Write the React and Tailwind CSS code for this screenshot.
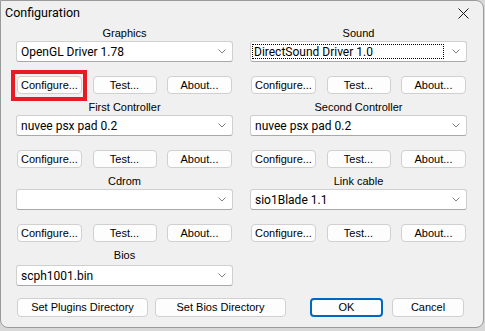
import React from 'react';

const Chevron = () => (
  <svg width="8" height="5" viewBox="0 0 8 5" className="shrink-0">
    <path d="M0.5 0.5 L4 4 L7.5 0.5" fill="none" stroke="#808080" strokeWidth="1" />
  </svg>
);

const Combo = ({ value, focused, className = '' }) => (
  <div className={'mt-[1px] h-[21px] w-full bg-white border border-[#cfcfcf] border-b-[#a8a8a8] rounded-[3px] flex items-center pr-[6px] ' + className}>
    {focused ? (
      <div className="ml-[1px] mr-[8px] flex-1 h-[15px] border border-dotted border-black flex items-center pl-[1px] text-[12px] leading-none">
        {value}
      </div>
    ) : (
      <div className="flex-1 pl-[4px] text-[12px] leading-none">{value}</div>
    )}
    <Chevron />
  </div>
);

const Button = ({ children, className = '', primary }) => (
  <div
    className={
      'h-[18px] flex items-center justify-center bg-[#fdfdfd] rounded-[4px] text-[11px] leading-none font-["Liberation_Sans",sans-serif] ' +
      (primary ? 'border-2 border-[#0067c0] ' : 'border border-[#d0d0d0] ') +
      className
    }
  >
    {children}
  </div>
);

const Section = ({ label, value, focused, highlight, className = '' }) => (
  <div className={'flex flex-col ' + className}>
    <div className="h-[14px] text-center text-[11px] leading-[14px] font-['Liberation_Sans',sans-serif]">{label}</div>
    <Combo value={value} focused={focused} />
    <div className="mt-[14px] flex justify-between pl-[1px] pr-[1px]">
      <div className="relative">
        <Button className="w-[65px]">Configure...</Button>
        {highlight && (
          <span className="absolute left-[-6px] top-[-6px] right-[-5px] bottom-[-7px] border-4 border-[#e81b23]" />
        )}
      </div>
      <Button className="w-[64px]">Test...</Button>
      <Button className="w-[65px]">About...</Button>
    </div>
  </div>
);

export default function App() {
  return (
    <div className="w-[485px] h-[331px] bg-[#d8d8d8] text-black font-['Roboto',sans-serif]">
      <div className="w-[484px] h-[328px] bg-[#f0f0f0] border border-[#9a9a9a] rounded-tr-[8px] rounded-b-[8px] flex flex-col">
        <div className="h-[25px] flex items-center justify-between pl-[4px] pr-[14px]">
          <span className="text-[12.5px]">Configuration</span>
          <svg width="11" height="11" viewBox="0 0 11 11">
            <path d="M0.5 0.5 L10.5 10.5 M10.5 0.5 L0.5 10.5" stroke="#1a1a1a" strokeWidth="1" />
          </svg>
        </div>
        <div className="grid grid-cols-[217px_217px] gap-x-[17px] gap-y-[6px] pl-[15px]">
          <Section label="Graphics" value="OpenGL Driver 1.78" highlight />
          <Section label="Sound" value="DirectSound Driver 1.0" focused />
          <Section label="First Controller" value="nuvee psx pad 0.2" />
          <Section label="Second Controller" value="nuvee psx pad 0.2" />
          <Section label="Cdrom" value="" />
          <Section label="Link cable" value="sio1Blade 1.1" />
          <div className="flex flex-col">
            <div className="h-[14px] text-center text-[11px] leading-[14px] font-['Liberation_Sans',sans-serif]">Bios</div>
            <Combo value="scph1001.bin" className="mt-[3px] h-[20px]" />
          </div>
        </div>
        <div className="mt-[12px] flex pl-[16px]">
          <Button className="w-[131px] h-[19px]">Set Plugins Directory</Button>
          <Button className="ml-[7px] w-[131px] h-[19px]">Set Bios Directory</Button>
          <Button primary className="ml-[24px] w-[73px] h-[19px]">OK</Button>
          <Button className="ml-[9px] w-[72px] h-[19px]">Cancel</Button>
        </div>
      </div>
    </div>
  );
}
